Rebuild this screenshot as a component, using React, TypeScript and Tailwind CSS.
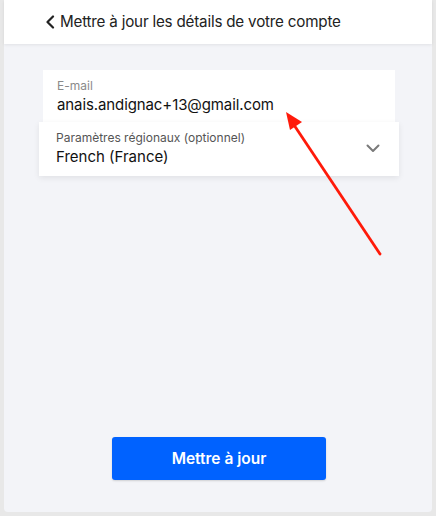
import React from 'react';

const ChevronLeft = () => (
    <svg width="10" height="14" viewBox="0 0 10 14" fill="none">
        <path d="M8 1.5L2.5 7L8 12.5" stroke="#222" strokeWidth="2.2" strokeLinecap="round" strokeLinejoin="round" />
    </svg>
);

const ChevronDown = () => (
    <svg width="14" height="9" viewBox="0 0 14 9" fill="none">
        <path d="M1.5 1.5L7 7L12.5 1.5" stroke="#7a7a7a" strokeWidth="2" strokeLinecap="round" strokeLinejoin="round" />
    </svg>
);

export default function App() {
    return (
        <div className="w-[436px] h-[516px] bg-[#e8e8e8] px-[4px] pb-[4px] font-['Inter',sans-serif] relative overflow-hidden">
            <div className="h-full bg-[#f3f4f8] rounded-b-[4px] flex flex-col">
                {/* HEADER */}
                <div className="h-[44px] bg-white shadow-[0_1px_3px_rgba(0,0,0,0.08)] flex items-center pl-[41px] gap-[5px] relative z-10">
                    <ChevronLeft />
                    <span className="text-[15.2px] text-[#222] tracking-[-0.2px]">Mettre à jour les détails de votre compte</span>
                </div>

                {/* FORM */}
                <div className="pt-[26px] flex flex-col">
                    <div className="ml-[39px] mr-[37px] bg-white h-[52px] px-[14px] pt-[8px] flex flex-col">
                        <span className="text-[12px] text-[#8a8a8a] leading-[16px]">E-mail</span>
                        <span className="text-[15px] text-[#111] leading-[20px] mt-[1px] tracking-[-0.1px]">anais.andignac+13@gmail.com</span>
                    </div>
                    <div className="ml-[35px] mr-[33px] bg-white h-[54px] px-[17px] pt-[8px] flex items-start justify-between shadow-[0_2px_6px_rgba(0,0,0,0.08)] relative">
                        <div className="flex flex-col">
                            <span className="text-[12px] text-[#555] leading-[16px]">Paramètres régionaux (optionnel)</span>
                            <span className="text-[15px] text-[#111] leading-[20px] mt-[1px]">French (France)</span>
                        </div>
                        <div className="mt-[14px] mr-[2px]">
                            <ChevronDown />
                        </div>
                    </div>
                </div>

                <div className="flex-1" />

                {/* ACTION */}
                <div className="flex justify-center pb-[32px] pl-[2px]">
                    <button className="w-[214px] h-[43px] bg-[#0062ff] text-white font-semibold text-[15.5px] rounded-[3px] shadow-[0_1px_2px_rgba(0,0,0,0.15)]">
                        Mettre à jour
                    </button>
                </div>
            </div>

            {/* ANNOTATION ARROW */}
            <svg className="absolute left-0 top-0 pointer-events-none" width="436" height="516">
                <line x1="380" y1="254" x2="294" y2="125" stroke="#ff1a0a" strokeWidth="2.8" strokeLinecap="round" />
                <polygon points="286,112 302,122 290,130" fill="#ff1a0a" />
            </svg>
        </div>
    );
}
